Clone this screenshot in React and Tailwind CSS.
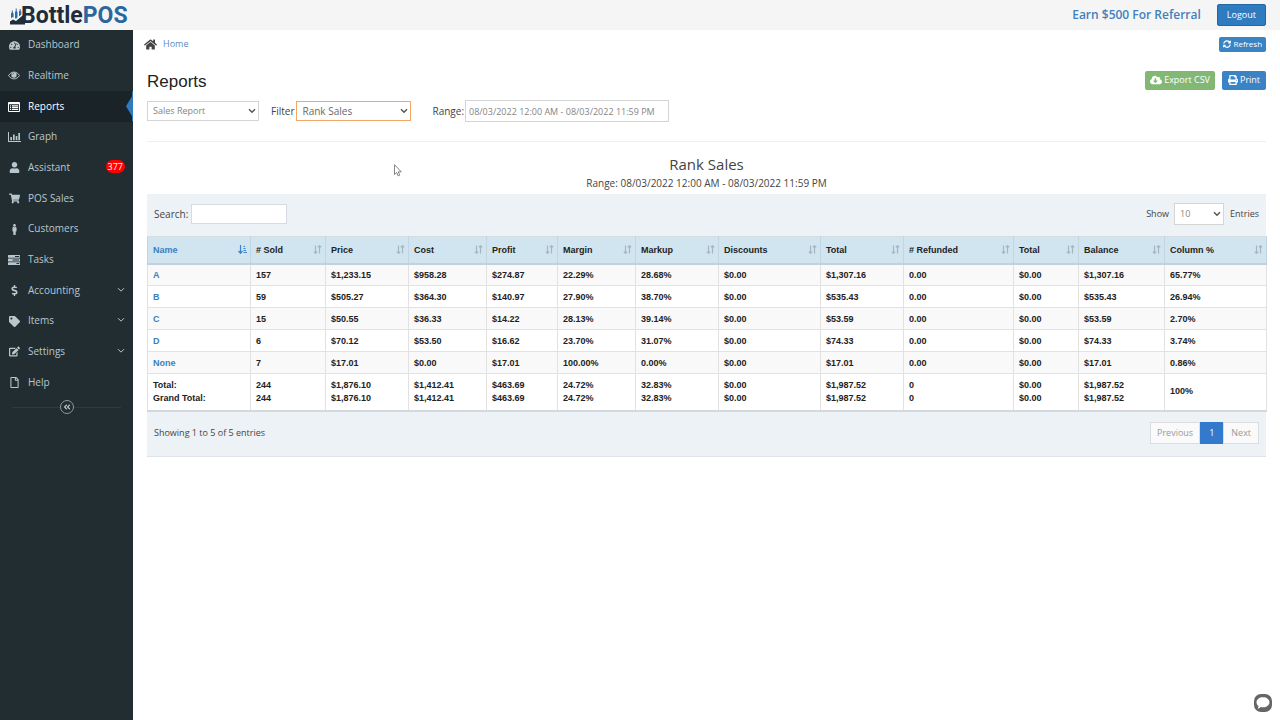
import {
  FaTachometerAlt, FaUser, FaShoppingCart, FaMale, FaDollarSign, FaTag, FaEdit,
  FaRegFile, FaAngleDoubleLeft, FaHome, FaSyncAlt, FaCloudDownloadAlt, FaPrint,
} from "react-icons/fa";

function ListIcon() {
  return (
    <svg viewBox="0 0 12 10" className="h-[10px] w-3 shrink-0" fill="currentColor">
      <path fillRule="evenodd" d="M1 0h10a1 1 0 0 1 1 1v8a1 1 0 0 1-1 1H1a1 1 0 0 1-1-1V1a1 1 0 0 1 1-1zM1 2.3V9h10V2.3z" />
      <path d="M2 3.300h1.100v1.200H2zM4 3.300h6.200v1.200H4zM2 5.100h1.100v1.200H2zM4 5.100h6.200v1.200H4zM2 6.900h1.100v1.200H2zM4 6.900h6.200v1.200H4z" />
    </svg>
  );
}

function EyeIcon() {
  return (
    <svg viewBox="0 0 12 9" className="h-[9px] w-3 shrink-0">
      <path fill="none" stroke="currentColor" d="M.6 4.500C1.800 2.400 3.800 1.100 6 1.100s4.200 1.300 5.400 3.400C10.200 6.600 8.200 7.900 6 7.900S1.800 6.600.6 4.500z" />
      <circle cx="6" cy="4" r="2.700" fill="currentColor" />
      <path fill="none" stroke="#222d32" strokeWidth=".4" d="M4.500 3.900A1.500 1.500 0 0 1 6 2.400" />
    </svg>
  );
}

function GraphIcon() {
  return (
    <svg viewBox="0 0 13 10" className="h-[10px] w-[13px] shrink-0" fill="currentColor">
      <path d="M0 0h1v9h12v1H0zM2.300 5h1.700v3.200H2.300zM5 2.600h1.700v5.600H5zM7.700 4h1.700v4.200H7.700zM10.300 1H12v7.200h-1.700z" />
    </svg>
  );
}

function TasksIcon() {
  return (
    <svg viewBox="0 0 12 10" className="h-[10px] w-3 shrink-0">
      <path fill="currentColor" d="M.5 0h11a.5.5 0 0 1 .5.5v1.800a.5.5 0 0 1-.5.5H.5A.5.5 0 0 1 0 2.300V.5A.5.5 0 0 1 .5 0zM.5 3.600h11a.5.5 0 0 1 .5.5v1.800a.5.5 0 0 1-.5.5H.5a.5.5 0 0 1-.5-.5V4.100a.5.5 0 0 1 .5-.5zM.5 7.200h11a.5.5 0 0 1 .5.5v1.800a.5.5 0 0 1-.5.5H.5a.5.5 0 0 1-.5-.5V7.700a.5.5 0 0 1 .5-.5z" />
      <path fill="#222d32" d="M7 .9h4.200v1H7zM4.500 4.500h6.700v1H4.500zM8.500 8.100h2.700v1H8.500z" />
    </svg>
  );
}

function Chevron() {
  return (
    <svg viewBox="0 0 8 6" className="ml-auto h-[6px] w-2" fill="none" stroke="currentColor">
      <path d="M1 1.200l3 3 3-3" />
    </svg>
  );
}

function Select({ className, children, ...rest }) {
  return (
    <span className="relative flex items-center">
      <select {...rest} className={"appearance-none border bg-white pr-3 pl-[5px] " + className}>{children}</select>
      <svg viewBox="0 0 8 6" className="pointer-events-none absolute right-[3px] h-[6px] w-2" fill="none" stroke="#555" strokeWidth="1.500">
        <path d="M1 1.200l3 3 3-3" />
      </svg>
    </span>
  );
}

const nav = [
  { label: "Dashboard", icon: FaTachometerAlt },
  { label: "Realtime", icon: EyeIcon },
  { label: "Reports", icon: ListIcon, active: true },
  { label: "Graph", icon: GraphIcon },
  { label: "Assistant", icon: FaUser, badge: "377" },
  { label: "POS Sales", icon: FaShoppingCart },
  { label: "Customers", icon: FaMale },
  { label: "Tasks", icon: TasksIcon },
  { label: "Accounting", icon: FaDollarSign, sub: true },
  { label: "Items", icon: FaTag, sub: true },
  { label: "Settings", icon: FaEdit, sub: true },
  { label: "Help", icon: FaRegFile },
];

const heads = ["Name", "# Sold", "Price", "Cost", "Profit", "Margin", "Markup", "Discounts", "Total", "# Refunded", "Total", "Balance", "Column %"];
const cols = ["w-[103px]", "w-[75px]", "w-[83px]", "w-[78px]", "w-[71px]", "w-[78px]", "w-[83px]", "w-[102px]", "w-[83px]", "w-[110px]", "w-[65px]", "w-[86px]", "w-[102px]"];
const rows = [
  ["A", "157", "$1,233.15", "$958.28", "$274.87", "22.29%", "28.68%", "$0.00", "$1,307.16", "0.00", "$0.00", "$1,307.16", "65.77%"],
  ["B", "59", "$505.27", "$364.30", "$140.97", "27.90%", "38.70%", "$0.00", "$535.43", "0.00", "$0.00", "$535.43", "26.94%"],
  ["C", "15", "$50.55", "$36.33", "$14.22", "28.13%", "39.14%", "$0.00", "$53.59", "0.00", "$0.00", "$53.59", "2.70%"],
  ["D", "6", "$70.12", "$53.50", "$16.62", "23.70%", "31.07%", "$0.00", "$74.33", "0.00", "$0.00", "$74.33", "3.74%"],
  ["None", "7", "$17.01", "$0.00", "$17.01", "100.00%", "0.00%", "$0.00", "$17.01", "0.00", "$0.00", "$17.01", "0.86%"],
];
const totals = ["244", "$1,876.10", "$1,412.41", "$463.69", "24.72%", "32.83%", "$0.00", "$1,987.52", "0", "$0.00", "$1,987.52"];

function Logo() {
  return (
    <a href="#home" aria-label="BottlePOS" className="flex items-center pt-[1px]">
      <svg viewBox="0 0 15 18" className="h-[18px] w-[15px]">
        <path fill="#1f2d3d" d="M0 17.500v-3l3-2 3 1.500 9-7.500v11z" />
        <path fill="#2a6da8" d="M1 11.500V6.500l.8-1V3.500h1v2l.8 1v4L2.500 10zM5 11V5l.7-1V1.500h1V4l.8 1v5L6 12zM9 9.500V4.500l.6-1V2h1v1.500l.7 1V8z" />
        <path fill="none" stroke="#f5f5f5" d="M0 13.500l3-2.300 3 1.800 9-8" />
      </svg>
      <span className="-ml-1 font-['Roboto',sans-serif] text-[23px] leading-[29px] font-bold text-[#1f2d3a]">
        Bottle<span className="text-[#2b669f]">POS</span>
      </span>
    </a>
  );
}

function SortIcon({ active }) {
  return active ? (
    <svg viewBox="0 0 9 9" className="h-[9px] w-[9px] shrink-0 text-[#3b82c8]" fill="none" stroke="currentColor" strokeWidth="1.200">
      <path d="M2.500 0v8M.5 6l2 2.300 2-2.300M5.500 1.500H7M5.500 3.500h2M5.500 5.500H8M5.500 7.500H9" />
    </svg>
  ) : (
    <svg viewBox="0 0 9 9" className="h-[9px] w-[9px] shrink-0 text-[#a5b6c3]" fill="none" stroke="currentColor" strokeWidth="1.200">
      <path d="M2.500 .5v8M.8 6.700l1.700 1.700 1.700-1.700M6.500 8.500v-8M4.800 2.300L6.500.600l1.700 1.700" />
    </svg>
  );
}

export default function App() {
  return (
    <div className="flex min-h-screen flex-col bg-white font-['Open_Sans',sans-serif] text-[10px] leading-4 text-[#444]">
      <header className="flex h-[30px] items-center bg-[#f5f5f5] pr-[14px] pl-[10px]">
        <Logo />
        <a href="#referral" className="ml-auto text-[12px] font-semibold text-[#4480bd]">Earn $500 For Referral</a>
        <button className="ml-4 h-[22px] rounded-[2px] border border-[#2368a5] bg-[#2f7bc0] px-[9px] text-[9px] font-medium text-white">Logout</button>
      </header>

      <div className="flex grow">
        <aside className="w-[133px] shrink-0 bg-[#222d32] text-[#b8c7ce]">
          <nav>
            <ul className="grid h-[368px] grid-rows-12">
              {nav.map(({ label, icon: Icon, active, badge, sub }) => (
                <li key={label} className={active ? "relative bg-[#1a2428] text-white" : ""}>
                  <a href={"#" + label} className="flex h-full items-center px-2 pb-[2px]">
                    <span className="mr-2 flex w-3 shrink-0 justify-center pt-[2px] text-[11px]"><Icon /></span>
                    <span>{label}</span>
                    {badge && <span className="ml-auto rounded-full bg-[#f00] px-[2px] text-[9px] leading-[13px] font-medium text-white">{badge}</span>}
                    {sub && <Chevron />}
                  </a>
                  {active && (
                    <svg viewBox="0 0 7 30" className="absolute top-0 right-0 h-full w-[7px]" fill="#2f7bc0">
                      <path d="M0 15L6 5V0h1v30H6v-5z" />
                    </svg>
                  )}
                </li>
              ))}
            </ul>
          </nav>
          <div className="flex items-center px-3 pt-[2px]">
            <span className="h-px grow bg-[#2d3a40]" />
            <button aria-label="Collapse menu" className="flex size-[14px] items-center justify-center rounded-full border border-[#8b999f] text-[8px]">
              <FaAngleDoubleLeft />
            </button>
            <span className="h-px grow bg-[#2d3a40]" />
          </div>
        </aside>

        <main className="min-w-0 grow px-[14px] pt-[6px]">
          <div className="flex items-center justify-between">
            <a href="#home" className="-ml-[3px] flex items-center gap-[6px] text-[9px] text-[#5b8cbd]">
              <FaHome className="text-[13px] text-[#444]" />Home
            </a>
            <button className="flex h-[15px] items-center gap-[2px] rounded-[2px] bg-[#3a84c6] px-1 text-[8px] font-medium text-white">
              <FaSyncAlt />Refresh
            </button>
          </div>

          <div className="mt-[18px] flex items-center justify-between">
            <h1 className="font-['Liberation_Sans',sans-serif] text-[17px] leading-6 text-[#222]">Reports</h1>
            <div className="flex gap-[7px] pb-1">
              <button className="flex h-[19px] items-center gap-[2px] rounded-[2px] bg-[#82b874] px-[5px] text-[9px] text-white">
                <FaCloudDownloadAlt className="text-[12px]" />Export CSV
              </button>
              <button className="flex h-[19px] items-center gap-[2px] rounded-[2px] bg-[#3a84c6] px-[6px] text-[9px] text-white">
                <FaPrint className="text-[10px]" />Print
              </button>
            </div>
          </div>

          <div className="mt-[6px] flex items-center border-b border-[#eee] pb-[19px]">
            <Select aria-label="Report" className="h-5 w-[112px] border-[#d5d5d5] text-[9px] text-[#858585]">
              <option>Sales Report</option>
            </Select>
            <label htmlFor="filter" className="mr-[2px] ml-3">Filter</label>
            <Select id="filter" className="h-5 w-[115px] border-[#f0a868] text-[10px] text-[#696969]">
              <option>Rank Sales</option>
            </Select>
            <label htmlFor="range" className="mr-[1px] ml-[21px]">Range:</label>
            <input id="range" defaultValue="08/03/2022 12:00 AM - 08/03/2022 11:59 PM" className="h-[22px] w-[204px] border border-[#d5d5d5] px-[3px] text-[9px] text-[#858585]" />
          </div>

          <div className="pt-3 pb-[3px] text-center">
            <h2 className="text-[15px] leading-5">Rank Sales</h2>
            <p className="mt-[1px] text-[10px] leading-4">Range: 08/03/2022 12:00 AM - 08/03/2022 11:59 PM</p>
          </div>

          <section className="border-b border-[#dde3e8] bg-[#edf2f6]">
            <div className="flex h-[42px] items-center px-[7px] pb-[3px]">
              <label htmlFor="search">Search:</label>
              <input id="search" className="ml-[3px] h-5 w-24 border border-[#d5dbe0] bg-white px-1" />
              <label htmlFor="entries" className="mr-[5px] ml-auto text-[9px]">Show</label>
              <Select id="entries" className="h-[22px] w-[50px] border-[#d5d5d5] text-[9px] text-[#858585]">
                <option>10</option>
              </Select>
              <span className="ml-[6px] text-[9px]">Entries</span>
            </div>

            <table className="w-full table-fixed border-collapse bg-white text-left font-['Liberation_Sans',sans-serif] text-[9px] font-bold text-[#222]">
              <colgroup>{cols.map((c, i) => <col key={i} className={c} />)}</colgroup>
              <thead>
                <tr className="h-[27px] bg-[#d1e5f0]">
                  {heads.map((h, i) => (
                    <th key={i} className="border border-t-[#d5dde3] border-r-[#c2d6e2] border-b-2 border-b-[#c3d0d8] border-l-[#c2d6e2] py-0 pr-[3px] pl-[5px]">
                      <span className={i === 0 ? "flex items-center justify-between text-[#3b7fc0]" : "flex items-center justify-between"}>
                        {h}
                        <SortIcon active={i === 0} />
                      </span>
                    </th>
                  ))}
                </tr>
              </thead>
              <tbody>
                {rows.map((r) => (
                  <tr key={r[0]} className="h-[22px] odd:bg-[#f9f9f9]">
                    {r.map((c, i) => (
                      <td key={i} className="border border-[#e2e2e2] px-[5px] py-0">
                        {i === 0 ? <a href={"#" + c} className="text-[#3b7fc0]">{c}</a> : c}
                      </td>
                    ))}
                  </tr>
                ))}
              </tbody>
              <tfoot>
                <tr className="h-[37px] leading-[13px]">
                  <td className="border border-b-2 border-[#e2e2e2] border-b-[#d3d8dc] px-[5px] py-0">Total:<br />Grand Total:</td>
                  {totals.map((t, i) => (
                    <td key={i} className="border border-b-2 border-[#e2e2e2] border-b-[#d3d8dc] px-[5px] py-0">{t}<br />{t}</td>
                  ))}
                  <td className="border border-b-2 border-[#e2e2e2] border-b-[#d3d8dc] px-[5px] py-0">100%</td>
                </tr>
              </tfoot>
            </table>

            <div className="flex h-[44px] items-center justify-between px-[7px] pb-[2px] text-[9px]">
              <p>Showing 1 to 5 of 5 entries</p>
              <div className="flex text-[#999]">
                <button className="h-[22px] border border-[#ddd] bg-[#fafafa] px-[6px]">Previous</button>
                <button className="h-[22px] bg-[#337acc] px-[9px] text-white">1</button>
                <button className="h-[22px] border border-[#ddd] bg-[#fafafa] px-[7px]">Next</button>
              </div>
            </div>
          </section>
        </main>
      </div>

      <button aria-label="Open chat" className="fixed right-[8px] bottom-[8px] flex size-[18px] items-center justify-center rounded-[7px] bg-[#666]">
        <svg viewBox="0 0 14 12" className="h-3 w-[14px] shrink-0" fill="#fff">
          <path d="M7 .3c3.700 0 6.500 2.100 6.500 5S10.700 10.300 7 10.300c-.8 0-1.500-.1-2.200-.3-.8.800-1.900 1.500-3.300 1.600.6-.6 1-1.400 1-2.500C1.200 8.200.5 6.800.5 5.300c0-2.900 2.800-5 6.500-5z" />
        </svg>
      </button>
      <svg viewBox="0 0 8 13" className="pointer-events-none absolute top-[164px] left-[394px] h-[13px] w-2" fill="#fff" stroke="#666" strokeWidth=".8">
        <path d="M.5.700v9.800l2.200-2 1.400 3.400 1.600-.7-1.400-3.300h3z" />
      </svg>
    </div>
  );
}
